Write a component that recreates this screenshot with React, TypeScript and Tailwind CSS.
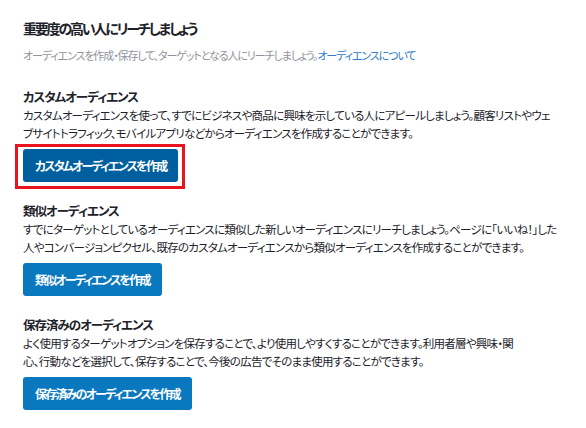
const font = "font-['Noto_Sans_CJK_JP','Noto_Sans',sans-serif] [font-feature-settings:'palt']";

interface SectionProps {
  title: string;
  lines: string[];
  button: string;
  highlighted?: boolean;
}

function Section({ title, lines, button, highlighted = false }: SectionProps) {
  const btn = (
    <button
      className={`h-[33px] px-[12px] rounded-[3px] text-white text-[12px] font-bold leading-none tracking-[-1.8px] ${
        highlighted ? 'bg-[#005f9e]' : 'bg-[#0a78be]'
      }`}
    >
      {button}
    </button>
  );

  return (
    <div className="flex flex-col">
      <h3 className="text-[12.5px] font-bold leading-[18px] text-[#1d2129] tracking-[-1px]">{title}</h3>
      <p className="text-[11.5px] leading-[18px] text-[#1d2129] tracking-[-0.75px]">
        {lines.map((l) => (
          <span key={l} className="block whitespace-nowrap">
            {l}
          </span>
        ))}
      </p>
      <div className="mt-[7px] flex">
        {highlighted ? (
          <div className="-ml-[8px] -mt-[5px] -mb-[7px] border-[3px] border-[#e8141e] pl-[5px] pr-[4px] pt-[2px] pb-[4px] flex">
            {btn}
          </div>
        ) : (
          btn
        )}
      </div>
    </div>
  );
}

export default function App() {
  return (
    <div className={`w-[586px] h-[428px] bg-white pl-[23px] pt-[17px] ${font}`}>
      <h2 className="text-[14px] font-bold leading-[22px] text-[#1d2129] tracking-[-2.2px]">
        重要度の高い人にリーチしましょう
      </h2>
      <p className="mt-[7px] text-[11px] leading-[18px] text-[#90949c] tracking-[-1.1px] whitespace-nowrap">
        オーディエンスを作成・保存して、ターゲットとなる人にリーチしましょう。
        <span className="text-[#2f7bc8]">オーディエンスについて</span>
      </p>

      <div className="mt-[24px] flex flex-col gap-[20px]">
        <Section
          title="カスタムオーディエンス"
          lines={[
            'カスタムオーディエンスを使って、すでにビジネスや商品に興味を示している人にアピールしましょう。顧客リストやウェ',
            'ブサイトトラフィック、モバイルアプリなどからオーディエンスを作成することができます。',
          ]}
          button="カスタムオーディエンスを作成"
          highlighted
        />
        <Section
          title="類似オーディエンス"
          lines={[
            'すでにターゲットとしているオーディエンスに類似した新しいオーディエンスにリーチしましょう。ページに「いいね！」した',
            '人やコンバージョンピクセル、既存のカスタムオーディエンスから類似オーディエンスを作成することができます。',
          ]}
          button="類似オーディエンスを作成"
        />
        <Section
          title="保存済みのオーディエンス"
          lines={[
            'よく使用するターゲットオプションを保存することで、より使用しやすくすることができます。利用者層や興味・関',
            '心、行動などを選択して、保存することで、今後の広告でそのまま使用することができます。',
          ]}
          button="保存済みのオーディエンスを作成"
        />
      </div>
    </div>
  );
}
